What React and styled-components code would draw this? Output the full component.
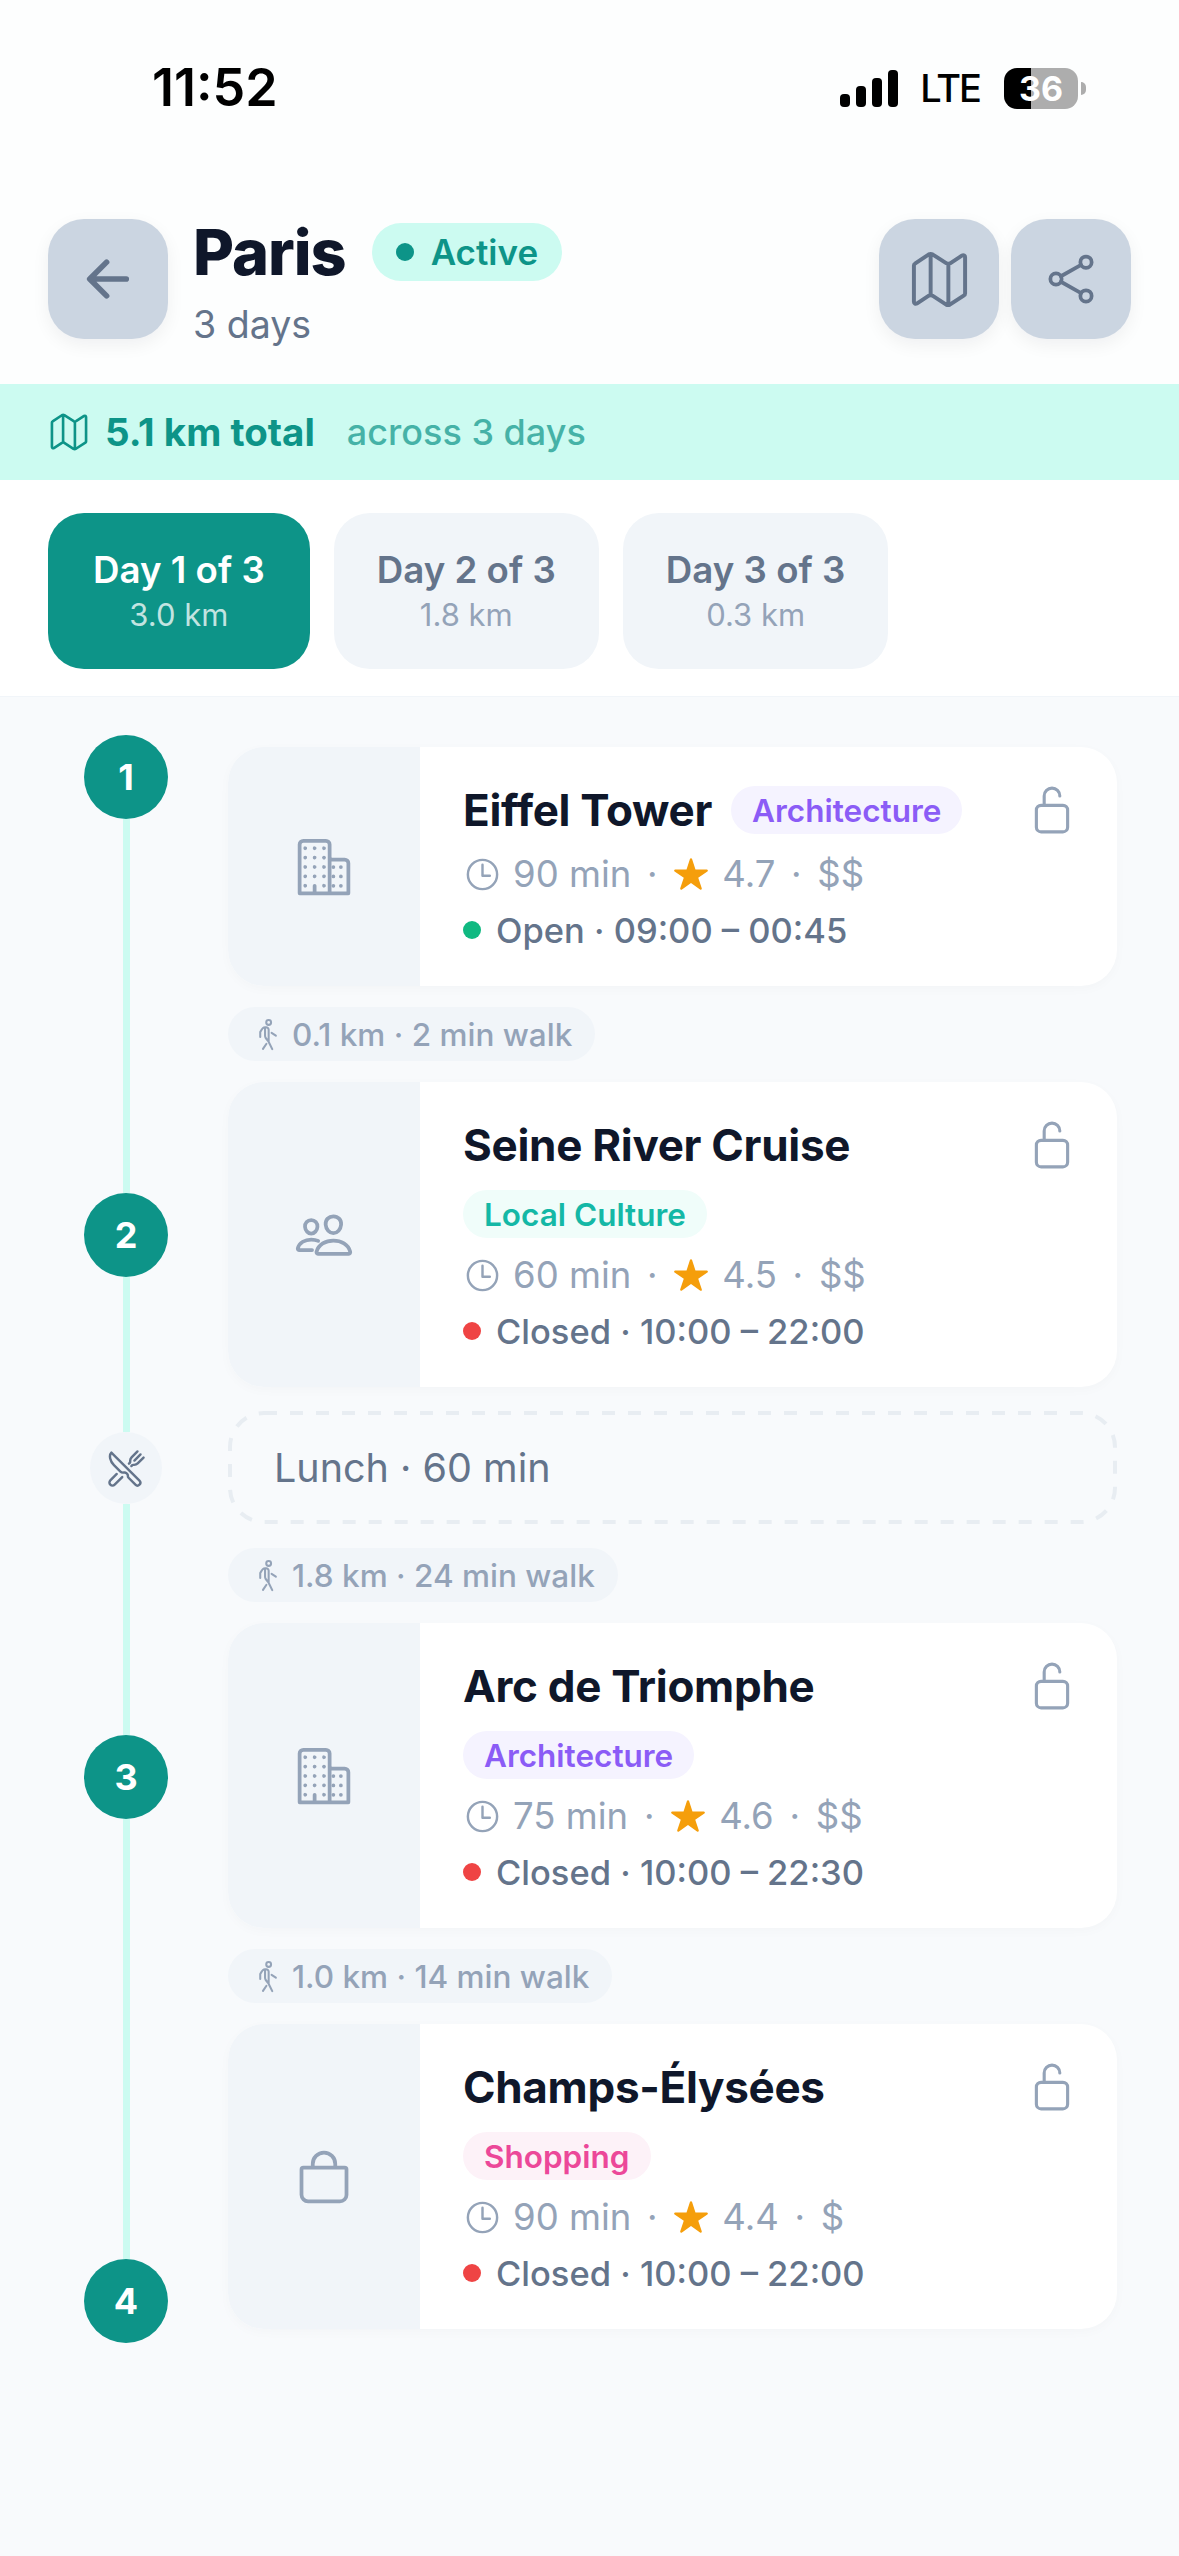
import React from "react";
import styled, { createGlobalStyle } from "styled-components";
import {
  IoArrowBack,
  IoMapOutline,
  IoShareSocialOutline,
  IoBusinessOutline,
  IoPeopleOutline,
  IoBagOutline,
  IoLockOpenOutline,
  IoTimeOutline,
  IoStar,
  IoWalkOutline,
  IoRestaurantOutline,
} from "react-icons/io5";

const GlobalStyle = createGlobalStyle`
  * { box-sizing: border-box; }
  html, body { margin: 0; padding: 0; background: #f8fafc; }
  body { font-family: Inter, "Noto Sans", sans-serif; }
`;

const Page = styled.div`
  width: 1179px;
  min-height: 2556px;
  background: #f8fafc;
`;

const Top = styled.div`
  background: #fdfefe;
`;

const StatusBar = styled.div`
  height: 219px;
  padding: 60px 93px 0 152px;
  display: flex;
  justify-content: space-between;
  align-items: flex-start;
`;

const Clock = styled.div`
  font-size: 52px;
  line-height: 56px;
  font-weight: 600;
  color: #000;
`;

const StatusRight = styled.div`
  display: flex;
  align-items: center;
  height: 56px;
`;

const Lte = styled.div`
  font-size: 38px;
  font-weight: 500;
  letter-spacing: -2px;
  color: #000;
  margin: 0 24px 0 22px;
`;

const Battery = styled.div`
  width: 74px;
  height: 41px;
  border-radius: 13px;
  background: linear-gradient(90deg, #000 36%, #adadad 36%);
  color: #fff;
  font-size: 34px;
  font-weight: 700;
  line-height: 41px;
  text-align: center;
`;

const BatteryTip = styled.div`
  width: 5px;
  height: 13px;
  margin-left: 3px;
  background: #adadad;
  border-radius: 0 6px 6px 0;
`;

const Header = styled.div`
  display: flex;
  align-items: flex-start;
  padding: 0 48px 38px;
`;

const IconButton = styled.div`
  width: 120px;
  height: 120px;
  flex: none;
  border-radius: 36px;
  background: #cbd5e1;
  color: #64748b;
  display: flex;
  align-items: center;
  justify-content: center;
  box-shadow: 0 6px 18px rgba(15, 23, 42, 0.06);
`;

const TitleBlock = styled.div`
  margin-left: 25px;
  flex: 1;
`;

const TitleRow = styled.div`
  display: flex;
  align-items: center;
  height: 66px;
`;

const PageTitle = styled.div`
  font-size: 63px;
  line-height: 66px;
  font-weight: 800;
  color: #0f172a;
  letter-spacing: -1px;
`;

const ActivePill = styled.div`
  margin-left: 26px;
  height: 58px;
  padding: 0 24px;
  border-radius: 29px;
  background: #ccfbf1;
  color: #0d9488;
  font-size: 35px;
  font-weight: 600;
  display: flex;
  align-items: center;
  gap: 17px;
`;

const ActiveDot = styled.span`
  width: 18px;
  height: 18px;
  border-radius: 50%;
  background: #0d9488;
`;

const PageSub = styled.div`
  margin-top: 19px;
  font-size: 37.5px;
  line-height: 42px;
  color: #64748b;
`;

const HeaderActions = styled.div`
  display: flex;
  gap: 12px;
`;

const Banner = styled.div`
  height: 96px;
  background: #ccfbf1;
  padding: 0 48px;
  display: flex;
  align-items: center;
  color: #0d9488;
`;

const BannerStrong = styled.span`
  margin-left: 15px;
  font-size: 38.5px;
  font-weight: 700;
`;

const BannerLight = styled.span`
  margin-left: 32px;
  font-size: 36px;
  font-weight: 500;
  opacity: 0.7;
`;

const Tabs = styled.div`
  display: flex;
  gap: 24px;
  padding: 33px 48px 27px;
  background: #fff;
  border-bottom: 1px solid #f1f5f9;
`;

const Tab = styled.div`
  height: 156px;
  padding: 0 ${(p) => (p.$active ? "45px" : "43px")};
  border-radius: 36px;
  background: ${(p) => (p.$active ? "#0d9488" : "#f1f5f9")};
  display: flex;
  flex-direction: column;
  align-items: center;
  justify-content: center;
  gap: 4px;
`;

const TabTitle = styled.div`
  font-size: 36.7px;
  line-height: 44px;
  font-weight: 600;
  color: ${(p) => (p.$active ? "#fff" : "#64748b")};
`;

const TabSub = styled.div`
  font-size: 31px;
  line-height: 38px;
  color: ${(p) => (p.$active ? "rgba(255,255,255,0.75)" : "#94a3b8")};
`;

const Main = styled.div`
  display: flex;
  align-items: flex-start;
  gap: 60px;
  padding: 38px 62px 0 84px;
`;

const Rail = styled.div`
  width: 84px;
  flex: none;
  display: flex;
  flex-direction: column;
  align-items: center;
`;

const RailNode = styled.div`
  width: 84px;
  height: 84px;
  flex: none;
  border-radius: 50%;
  background: #0d9488;
  color: #fff;
  font-size: 36px;
  font-weight: 700;
  display: flex;
  align-items: center;
  justify-content: center;
`;

const MealNode = styled.div`
  width: 72px;
  height: 72px;
  flex: none;
  border-radius: 50%;
  background: #f1f5f9;
  color: #64748b;
  display: flex;
  align-items: center;
  justify-content: center;
`;

const Connector = styled.div`
  width: 7px;
  flex: none;
  height: ${(p) => p.$h}px;
  background: #ccfbf1;
`;

const List = styled.div`
  flex: 1;
  margin-top: 12px;
  display: flex;
  flex-direction: column;
  align-items: stretch;
`;

const Card = styled.div`
  display: flex;
  flex: none;
  background: #fff;
  border-radius: 36px;
  overflow: hidden;
  box-shadow: 0 3px 12px rgba(15, 23, 42, 0.025);
`;

const Thumb = styled.div`
  width: 192px;
  flex: none;
  background: #f1f5f9;
  color: #94a3b8;
  display: flex;
  align-items: center;
  justify-content: center;
`;

const CardBody = styled.div`
  flex: 1;
  padding: 36px 40px 34px 43px;
`;

const CardHead = styled.div`
  display: flex;
  align-items: center;
  height: 54px;
  margin-bottom: 15px;
  color: #94a3b8;
`;

const CardTitle = styled.div`
  font-size: 44px;
  line-height: 54px;
  font-weight: 700;
  color: #0f172a;
  letter-spacing: -0.3px;
`;

const Tag = styled.div`
  height: 48px;
  padding: 0 21px;
  border-radius: 24px;
  font-size: 31.5px;
  font-weight: 600;
  display: inline-flex;
  align-items: center;
  background: ${(p) => p.$bg};
  color: ${(p) => p.$fg};
`;

const InlineTag = styled.div`
  margin-left: 19px;
`;

const TagRow = styled.div`
  margin: 18px 0 15px;
  height: 48px;
`;

const LockSlot = styled.div`
  margin-left: auto;
  display: flex;
`;

const MetaRow = styled.div`
  display: flex;
  align-items: center;
  height: 44px;
  margin-bottom: 12px;
  font-size: 36.5px;
  color: #94a3b8;
`;

const MetaText = styled.span`
  margin-left: ${(p) => p.$ml || 0}px;
`;

const MetaSep = styled.span`
  width: 42px;
  text-align: center;
`;

const HoursRow = styled.div`
  display: flex;
  align-items: center;
  height: 44px;
  font-size: 34.5px;
  font-weight: 500;
  color: #64748b;
`;

const HoursDot = styled.span`
  width: 18px;
  height: 18px;
  margin-right: 15px;
  border-radius: 50%;
  background: ${(p) => (p.$open ? "#10b981" : "#ef4444")};
`;

const WalkPill = styled.div`
  align-self: flex-start;
  height: 54px;
  margin: ${(p) => (p.$afterLunch ? "24px" : "21px")} 0 21px;
  padding: 0 23px 0 24px;
  border-radius: 27px;
  background: #f1f5f9;
  color: #94a3b8;
  font-size: 31.5px;
  font-weight: 500;
  display: flex;
  align-items: center;
  gap: 7px;
`;

const LunchBox = styled.div`
  position: relative;
  height: 113px;
  flex: none;
  margin-top: 24px;
  padding: 0 46px;
  font-size: 39.5px;
  color: #64748b;
  display: flex;
  align-items: center;
`;

const LunchOutline = styled.svg`
  position: absolute;
  inset: 0;
  width: 100%;
  height: 100%;
`;

const TAGS = {
  Architecture: { bg: "#f5f3ff", fg: "#8b5cf6" },
  "Local Culture": { bg: "#f0fdfa", fg: "#14b8a6" },
  Shopping: { bg: "#fdf2f8", fg: "#ec4899" },
};

const stops = [
  { name: "Eiffel Tower", tag: "Architecture", inlineTag: true, Icon: IoBusinessOutline, mins: 90, rating: "4.7", price: "$$", open: true, hours: "09:00 – 00:45" },
  { name: "Seine River Cruise", tag: "Local Culture", Icon: IoPeopleOutline, mins: 60, rating: "4.5", price: "$$", hours: "10:00 – 22:00" },
  { name: "Arc de Triomphe", tag: "Architecture", Icon: IoBusinessOutline, mins: 75, rating: "4.6", price: "$$", hours: "10:00 – 22:30" },
  { name: "Champs-Élysées", tag: "Shopping", Icon: IoBagOutline, mins: 90, rating: "4.4", price: "$", hours: "10:00 – 22:00" },
];

const StopCard = ({ stop }) => {
  const { name, tag, inlineTag, Icon, mins, rating, price, open, hours } = stop;
  const tagEl = <Tag $bg={TAGS[tag].bg} $fg={TAGS[tag].fg}>{tag}</Tag>;
  return (
    <Card>
      <Thumb>
        <Icon size={60} />
      </Thumb>
      <CardBody>
        <CardHead>
          <CardTitle>{name}</CardTitle>
          {inlineTag && <InlineTag>{tagEl}</InlineTag>}
          <LockSlot>
            <IoLockOpenOutline size={50} />
          </LockSlot>
        </CardHead>
        {!inlineTag && <TagRow>{tagEl}</TagRow>}
        <MetaRow>
          <IoTimeOutline size={39} />
          <MetaText $ml={11}>{mins} min</MetaText>
          <MetaSep>·</MetaSep>
          <IoStar size={36} color="#f59e0b" />
          <MetaText $ml={13}>{rating}</MetaText>
          <MetaSep>·</MetaSep>
          <MetaText>{price}</MetaText>
        </MetaRow>
        <HoursRow>
          <HoursDot $open={open} />
          {open ? "Open" : "Closed"} · {hours}
        </HoursRow>
      </CardBody>
    </Card>
  );
};

const Walk = ({ text, afterLunch }) => (
  <WalkPill $afterLunch={afterLunch}>
    <IoWalkOutline size={33} />
    {text}
  </WalkPill>
);

const App = () => (
  <Page>
    <GlobalStyle />
    <Top>
      <StatusBar>
        <Clock>11:52</Clock>
        <StatusRight>
          <svg width="58" height="37" viewBox="0 0 58 37">
            <rect x="0" y="24" width="10" height="13" rx="4" fill="#000" />
            <rect x="16" y="16" width="10" height="21" rx="4" fill="#000" />
            <rect x="32" y="8" width="10" height="29" rx="4" fill="#000" />
            <rect x="48" y="0" width="10" height="37" rx="4" fill="#000" />
          </svg>
          <Lte>LTE</Lte>
          <Battery>36</Battery>
          <BatteryTip />
        </StatusRight>
      </StatusBar>
      <Header>
        <IconButton>
          <IoArrowBack size={60} />
        </IconButton>
        <TitleBlock>
          <TitleRow>
            <PageTitle>Paris</PageTitle>
            <ActivePill>
              <ActiveDot />
              Active
            </ActivePill>
          </TitleRow>
          <PageSub>3 days</PageSub>
        </TitleBlock>
        <HeaderActions>
          <IconButton>
            <IoMapOutline size={63} />
          </IconButton>
          <IconButton>
            <IoShareSocialOutline size={60} />
          </IconButton>
        </HeaderActions>
      </Header>
    </Top>
    <Banner>
      <IoMapOutline size={42} />
      <BannerStrong>5.1 km total</BannerStrong>
      <BannerLight>across 3 days</BannerLight>
    </Banner>
    <Tabs>
      <Tab $active>
        <TabTitle $active>Day 1 of 3</TabTitle>
        <TabSub $active>3.0 km</TabSub>
      </Tab>
      <Tab>
        <TabTitle>Day 2 of 3</TabTitle>
        <TabSub>1.8 km</TabSub>
      </Tab>
      <Tab>
        <TabTitle>Day 3 of 3</TabTitle>
        <TabSub>0.3 km</TabSub>
      </Tab>
    </Tabs>
    <Main>
      <Rail>
        <RailNode>1</RailNode>
        <Connector $h={374} />
        <RailNode>2</RailNode>
        <Connector $h={155} />
        <MealNode>
          <IoRestaurantOutline size={39} />
        </MealNode>
        <Connector $h={231} />
        <RailNode>3</RailNode>
        <Connector $h={440} />
        <RailNode>4</RailNode>
      </Rail>
      <List>
        <StopCard stop={stops[0]} />
        <Walk text="0.1 km · 2 min walk" />
        <StopCard stop={stops[1]} />
        <LunchBox>
          <LunchOutline>
            <rect x="2" y="2" width="885" height="109" rx="34" fill="none" stroke="#e8edf2" strokeWidth="4" strokeDasharray="13 13" />
          </LunchOutline>
          Lunch · 60 min
        </LunchBox>
        <Walk afterLunch text="1.8 km · 24 min walk" />
        <StopCard stop={stops[2]} />
        <Walk text="1.0 km · 14 min walk" />
        <StopCard stop={stops[3]} />
      </List>
    </Main>
  </Page>
);

export default App;
